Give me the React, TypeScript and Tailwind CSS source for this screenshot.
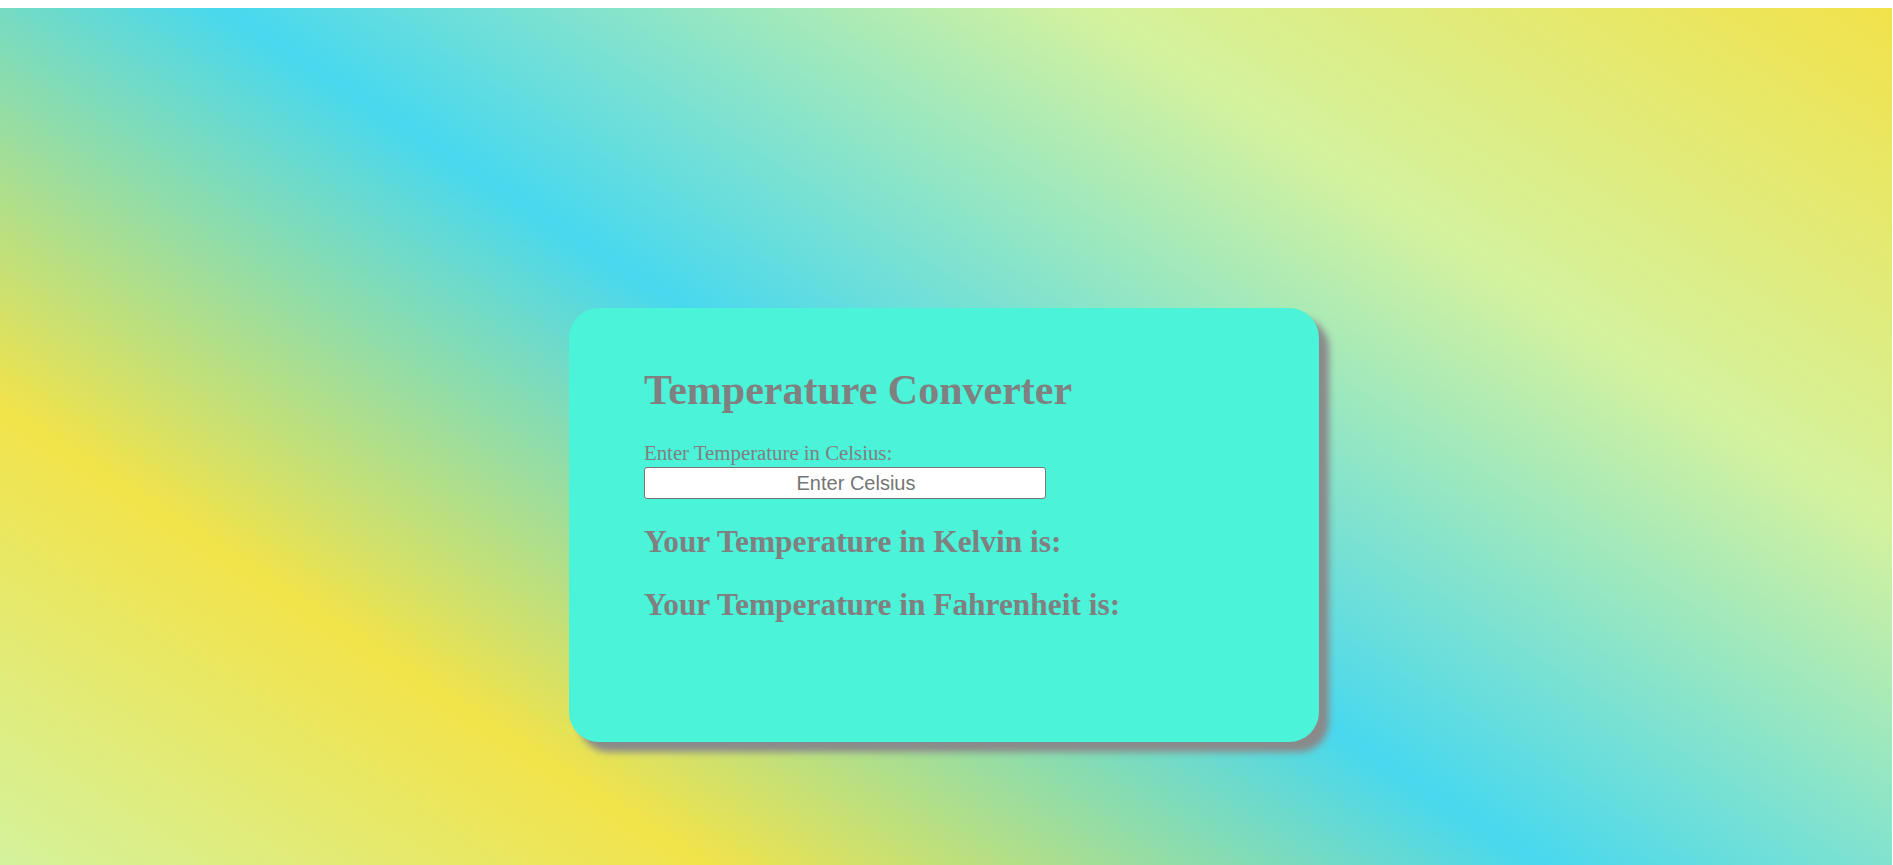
import React from 'react';

const App: React.FC = () => {
  return (
    <div className="bg-white pt-2 pr-px">
      <div className="h-[857px] pt-[300px] bg-[linear-gradient(33deg,#d4f29c_0%,#f2e34a_22%,#48d8ef_48%,#d4f29e_75%,#f2e24a_100%)]">
        <div className="ml-[569px] w-[750px] h-[434px] rounded-[30px] bg-[#4bf3d9] shadow-[10px_10px_7px_#8a8a8a] pl-[75px] pt-[59px] text-[#808080] font-['Liberation_Serif',serif]">
          <h1 className="text-[42px] leading-[1.1] font-bold">Temperature Converter</h1>
          <label htmlFor="celsius" className="block mt-[29px] text-[20.8px] leading-[1.1]">
            Enter Temperature in Celsius:
          </label>
          <input
            id="celsius"
            type="text"
            placeholder="Enter Celsius"
            className="block mt-[2px] w-[402px] h-[32px] pl-[22px] bg-white border border-[#767676] rounded-[3px] text-center text-[20px] font-['Liberation_Sans',Arial,sans-serif] text-[#333] placeholder:text-[#757575] outline-none"
          />
          <h2 className="mt-[26px] text-[31.4px] leading-[1.1] font-bold">Your Temperature in Kelvin is:</h2>
          <h2 className="mt-[28px] text-[31.4px] leading-[1.1] font-bold">Your Temperature in Fahrenheit is:</h2>
        </div>
      </div>
    </div>
  );
};

export default App;
